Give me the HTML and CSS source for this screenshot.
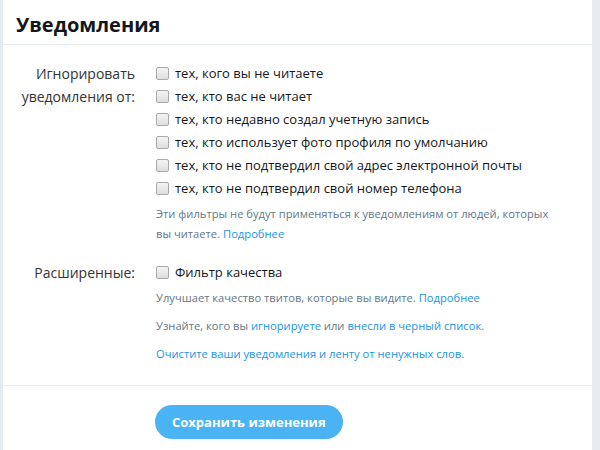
FILE: index.html
```html
<!DOCTYPE html>
<html lang="ru">
<head>
<meta charset="utf-8">
<link rel="stylesheet" href="styles.css">
</head>
<body>
<div class="panel">
  <h1 class="title">Уведомления</h1>
  <div class="content">
    <div class="row">
      <div class="label">Игнорировать уведомления от:</div>
      <div class="controls">
        <label class="check"><span class="box"></span>тех, кого вы не читаете</label>
        <label class="check"><span class="box"></span>тех, кто вас не читает</label>
        <label class="check"><span class="box"></span>тех, кто недавно создал учетную запись</label>
        <label class="check"><span class="box"></span>тех, кто использует фото профиля по умолчанию</label>
        <label class="check"><span class="box"></span>тех, кто не подтвердил свой адрес электронной почты</label>
        <label class="check"><span class="box"></span>тех, кто не подтвердил свой номер телефона</label>
        <p class="help">Эти фильтры не будут применяться к уведомлениям от людей, которых вы читаете. <a href="#">Подробнее</a></p>
      </div>
    </div>
    <div class="row adv">
      <div class="label">Расширенные:</div>
      <div class="controls">
        <label class="check"><span class="box"></span>Фильтр качества</label>
        <p class="help">Улучшает качество твитов, которые вы видите. <a href="#">Подробнее</a></p>
        <p class="help more">Узнайте, кого вы <a href="#">игнорируете</a> или <a href="#">внесли в черный список</a>.</p>
        <p class="help more"><a href="#">Очистите ваши уведомления и ленту от ненужных слов.</a></p>
      </div>
    </div>
  </div>
  <div class="footer">
    <button class="save">Сохранить изменения</button>
  </div>
</div>
</body>
</html>
```
FILE: styles.css
```css
html, body {
  margin: 0;
  padding: 0;
  background: #e6ecf0;
  font-family: "Open Sans", "Noto Sans", sans-serif;
  color: #14171a;
}
.panel {
  margin-left: 3px;
  width: 589px;
  background: #fff;
  min-height: 450px;
}
.title {
  margin: 0;
  padding: 10px 13px 0 13px;
  height: 34px;
  font-size: 20px;
  font-weight: 700;
  line-height: 30px;
  border-bottom: 1px solid #e6ecf0;
}
.content {
  padding: 17px 0 21px 0;
  border-bottom: 1px solid #e6ecf0;
}
.row {
  display: flex;
}
.row.adv {
  margin-top: 17px;
}
.label {
  width: 132px;
  text-align: right;
  font-size: 14px;
  line-height: 23px;
  color: #333;
  padding-right: 21px;
  box-sizing: content-box;
}
.controls {
  display: flex;
  flex-direction: column;
  flex: 1;
}
.check {
  display: flex;
  align-items: center;
  font-size: 13px;
  line-height: 23px;
  color: #14171a;
}
.box {
  width: 11px;
  height: 11px;
  border: 1px solid #a9a9a9;
  border-radius: 2px;
  background: linear-gradient(#f4f4f4, #dedede);
  margin-right: 6px;
  flex: none;
}
.help {
  margin: 4px 0 0 0;
  font-size: 11.2px;
  line-height: 20px;
  color: #657786;
  width: 405px;
}
.help.more {
  margin-top: 8px;
}
.help a {
  color: #1b95e0;
  text-decoration: none;
}
.footer {
  padding: 19px 0 0 152px;
}
.save {
  height: 34px;
  padding: 0 17px;
  border: none;
  border-radius: 17px;
  background: #4ab3f4;
  color: #fff;
  font-family: "Open Sans", "Noto Sans", sans-serif;
  font-weight: 700;
  font-size: 13px;
}
```
